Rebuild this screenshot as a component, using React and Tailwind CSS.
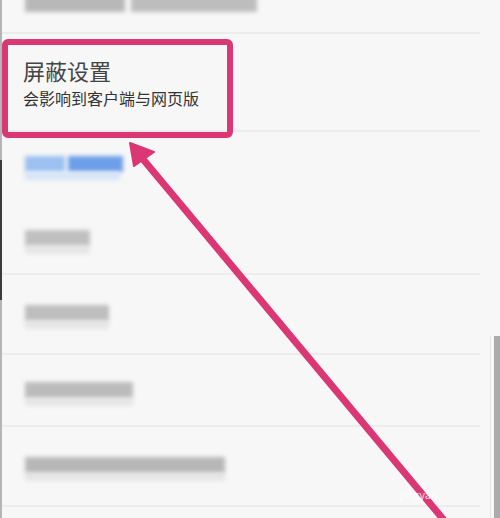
import React from 'react';

const Blur = ({ w, color = 'bg-[#b3b3b3]' }) => (
  <div className="flex flex-col">
    <div className={`h-[16px] ${color} blur-[2px] opacity-80`} style={{ width: w }} />
    <div className="h-[8px] bg-[#dedede] blur-[2px] opacity-70" style={{ width: w }} />
  </div>
);

const App = () => {
  return (
    <div className="relative w-[500px] h-[518px] overflow-hidden bg-[#f7f7f7] font-['Noto_Sans_CJK_SC','Noto_Sans',sans-serif]">
      {/* left edge */}
      <div className="absolute left-0 top-0 h-full w-[2px] bg-[#b5b5b5]" />
      <div className="absolute left-0 top-[160px] h-[140px] w-[2px] bg-[#3a3a3a]" />

      <div className="flex flex-col w-[480px]">
        {/* cut-off top item */}
        <div className="h-[34px] pl-[25px] border-b-2 border-[#ececec]">
          <div className="flex gap-[6px] -mt-[4px]">
            <div className="h-[16px] w-[100px] bg-[#b8b8b8] blur-[2px]" />
            <div className="h-[16px] w-[126px] bg-[#bdbdbd] blur-[2px]" />
          </div>
        </div>

        {/* 屏蔽设置 */}
        <div className="h-[98px] pl-[23px] pt-[21px] border-b-2 border-[#ececec]">
          <div className="text-[22px] leading-[30px] text-[#444]">屏蔽设置</div>
          <div className="text-[16px] leading-[22px] text-[#333] mt-[2px]">会影响到客户端与网页版</div>
        </div>

        {/* blue item */}
        <div className="h-[72px] pl-[25px] pt-[24px]">
          <div className="flex gap-[3px]">
            <div className="h-[16px] w-[40px] bg-[#9cc0f2] blur-[2px]" />
            <div className="h-[16px] w-[55px] bg-[#6d9ee8] blur-[2px]" />
          </div>
          <div className="h-[8px] w-[95px] bg-[#d6e4f8] blur-[2px]" />
        </div>

        {/* ooo item */}
        <div className="h-[71px] pl-[25px] pt-[26px] border-b-2 border-[#ececec]">
          <Blur w={65} color="bg-[#b3b3b3]" />
        </div>

        <div className="h-[80px] pl-[25px] pt-[30px] border-b-2 border-[#ececec]">
          <Blur w={84} color="bg-[#b0b0b0]" />
        </div>

        <div className="h-[72px] pl-[25px] pt-[27px] border-b-2 border-[#ececec]">
          <Blur w={108} color="bg-[#adadad]" />
        </div>

        <div className="h-[80px] pl-[25px] pt-[30px] border-b-2 border-[#ececec]">
          <Blur w={200} color="bg-[#a8a8a8]" />
        </div>
      </div>

      {/* scrollbar */}
      <div className="absolute right-[9px] top-[336px] bottom-0 w-px bg-[#e6e6e6]" />
      <div className="absolute right-0 top-[336px] bottom-0 w-[6px] bg-[#ababab]" />

      {/* highlight box */}
      <div className="absolute left-[2px] top-[39px] w-[231px] h-[99px] border-[6px] border-[#db3775] rounded-[6px]" />

      {/* arrow */}
      <svg className="absolute left-0 top-0" width="500" height="518" viewBox="0 0 500 518">
        <line x1="142" y1="158" x2="448" y2="525" stroke="#db3775" strokeWidth="7" />
        <polygon points="130,143 134,166 154,152" fill="#db3775" stroke="#db3775" strokeWidth="2" strokeLinejoin="round" />
      </svg>

      <div className="absolute left-[400px] top-[486px] text-[11px] text-white/80">jingyan</div>
    </div>
  );
};

export default App;
